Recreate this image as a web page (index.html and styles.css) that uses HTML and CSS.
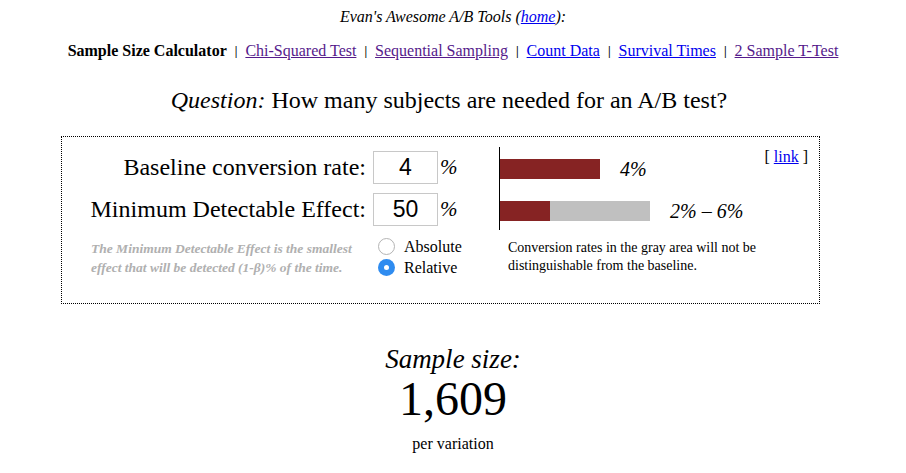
FILE: index.html
```html
<!DOCTYPE html>
<html>
<head>
<meta charset="utf-8">
<title>Sample Size Calculator</title>
<link rel="stylesheet" href="styles.css">
</head>
<body>
<div class="title">Evan's Awesome A/B Tools (<a class="new" href="#">home</a>):</div>
<nav class="nav">
  <b>Sample Size Calculator</b><span class="sep">|</span><a class="visited" href="#">Chi-Squared Test</a><span class="sep">|</span><a class="visited" href="#">Sequential Sampling</a><span class="sep">|</span><a class="new" href="#">Count Data</a><span class="sep">|</span><a class="new" href="#">Survival Times</a><span class="sep">|</span><a class="visited" href="#">2 Sample T-Test</a>
</nav>
<h1 class="question"><i>Question:</i> How many subjects are needed for an A/B test?</h1>

<div class="box">
  <div class="left">
    <div class="inputs">
      <label class="lbl">Baseline conversion rate:</label>
      <input class="num" type="text" value="4">
      <span class="pct">%</span>
      <label class="lbl">Minimum Detectable Effect:</label>
      <input class="num" type="text" value="50">
      <span class="pct">%</span>
    </div>
    <div class="lower">
      <div class="note">The Minimum Detectable Effect is the smallest<br>effect that will be detected (1-β)% of the time.</div>
      <div class="radios">
        <div class="radio"><span class="dot"></span>Absolute</div>
        <div class="radio"><span class="dot on"></span>Relative</div>
      </div>
    </div>
  </div>
  <div class="right">
    <div class="graphcol">
      <div class="graph">
        <div class="barrow">
          <div class="bar dark" style="width:100px"></div>
          <span class="barlbl">4%</span>
        </div>
        <div class="barrow">
          <div class="bar dark" style="width:50px"></div><div class="bar gray" style="width:100px"></div>
          <span class="barlbl">2% – 6%</span>
        </div>
      </div>
      <div class="explain">Conversion rates in the gray area will not be<br>distinguishable from the baseline.</div>
    </div>
    <div class="link">[ <a class="new" href="#">link</a> ]</div>
  </div>
</div>

<div class="result">
  <div class="rlabel">Sample size:</div>
  <div class="rnum">1,609</div>
  <div class="rper">per variation</div>
</div>
</body>
</html>
```

FILE: styles.css
```css
body {
  margin: 0;
  font-family: "Liberation Serif", "Times New Roman", serif;
  color: #000;
  background: #fff;
}
a.new { color: #0000ee; }
a.visited { color: #551a8b; }

.title {
  margin-top: 8px;
  text-align: center;
  font-style: italic;
  font-size: 16px;
  line-height: 18px;
}

.nav {
  margin-top: 15px;
  text-align: center;
  font-size: 16px;
  line-height: 20px;
}
.nav .sep {
  display: inline-block;
  margin: 0 8px;
  font-size: 12px;
  font-weight: bold;
  vertical-align: 1px;
}

.question {
  margin: 26px 0 0;
  text-align: center;
  font-weight: normal;
  font-size: 24px;
  line-height: 26px;
  padding-right: 8px;
}

.box {
  margin: 23px 0 0 61px;
  width: 757px;
  height: 156px;
  border: 1px dotted #000;
  display: flex;
  padding-top: 10px;
}

.left {
  width: 437px;
  padding-top: 4px;
}
.inputs {
  display: grid;
  grid-template-columns: 304px 65px auto;
  column-gap: 7px;
  row-gap: 9px;
  align-items: center;
}
.inputs .pct { margin-left: -5px; }
.lbl {
  text-align: right;
  font-size: 24px;
}
.num {
  box-sizing: border-box;
  width: 65px;
  height: 33px;
  border: 1px solid #c8c8c8;
  padding: 0;
  text-align: center;
  font-family: "Liberation Sans", Arial, sans-serif;
  font-size: 23px;
  color: #000;
  outline: none;
}
.pct {
  font-style: italic;
  font-size: 21px;
}

.lower {
  display: flex;
  margin-top: 10px;
}
.note {
  margin-left: 29px;
  width: 287px;
  margin-top: 3px;
  font-size: 13.5px;
  line-height: 19px;
  font-weight: bold;
  font-style: italic;
  color: #b0b0b0;
  white-space: nowrap;
}
.radios {
  display: flex;
  flex-direction: column;
}
.radio {
  display: flex;
  align-items: center;
  height: 21px;
  font-size: 16px;
}
.dot {
  box-sizing: border-box;
  width: 17px;
  height: 17px;
  border-radius: 50%;
  border: 1px solid #b4b4b4;
  background: #fff;
  margin-right: 9px;
  position: relative;
}
.dot.on {
  border: none;
  background: #2f8cf0;
}
.dot.on::after {
  content: "";
  position: absolute;
  left: 6px;
  top: 6px;
  width: 5px;
  height: 5px;
  border-radius: 50%;
  background: #fff;
}

.right {
  flex: 1;
  display: flex;
  justify-content: space-between;
  padding-right: 11px;
}
.graph {
  border-left: 1px solid #000;
  height: 71px;
  padding-top: 12px;
  display: flex;
  flex-direction: column;
  row-gap: 22px;
}
.barrow {
  display: flex;
  align-items: center;
  height: 20px;
}
.bar { height: 20px; }
.bar.dark { background: #862323; }
.bar.gray { background: #c0c0c0; }
.barlbl {
  margin-left: 20px;
  font-style: italic;
  font-size: 20px;
}
.explain {
  margin-top: 9px;
  padding-left: 9px;
  font-size: 14px;
  line-height: 18px;
}
.link {
  padding-top: 1px;
  font-size: 16px;
  line-height: 18px;
}

.result {
  text-align: center;
  margin-top: 39px;
}
.rlabel {
  font-style: italic;
  font-size: 27px;
  line-height: 32px;
}
.rnum {
  margin-top: 2px;
  font-size: 48px;
  line-height: 44px;
}
.rper {
  margin-top: 14px;
  font-size: 16px;
  line-height: 18px;
}
```
